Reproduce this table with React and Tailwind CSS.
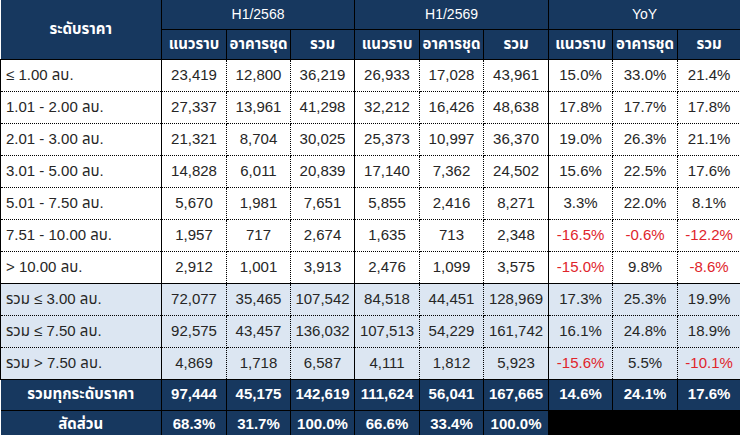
const groups = ["H1/2568", "H1/2569", "YoY"];
const subs = ["แนวราบ", "อาคารชุด", "รวม"];

const rows = [
  ["≤ 1.00 ลบ.", "23,419", "12,800", "36,219", "26,933", "17,028", "43,961", "15.0%", "33.0%", "21.4%"],
  ["1.01 - 2.00 ลบ.", "27,337", "13,961", "41,298", "32,212", "16,426", "48,638", "17.8%", "17.7%", "17.8%"],
  ["2.01 - 3.00 ลบ.", "21,321", "8,704", "30,025", "25,373", "10,997", "36,370", "19.0%", "26.3%", "21.1%"],
  ["3.01 - 5.00 ลบ.", "14,828", "6,011", "20,839", "17,140", "7,362", "24,502", "15.6%", "22.5%", "17.6%"],
  ["5.01 - 7.50 ลบ.", "5,670", "1,981", "7,651", "5,855", "2,416", "8,271", "3.3%", "22.0%", "8.1%"],
  ["7.51 - 10.00 ลบ.", "1,957", "717", "2,674", "1,635", "713", "2,348", "-16.5%", "-0.6%", "-12.2%"],
  ["> 10.00 ลบ.", "2,912", "1,001", "3,913", "2,476", "1,099", "3,575", "-15.0%", "9.8%", "-8.6%"],
];

const subtotals = [
  ["รวม ≤ 3.00 ลบ.", "72,077", "35,465", "107,542", "84,518", "44,451", "128,969", "17.3%", "25.3%", "19.9%"],
  ["รวม ≤ 7.50 ลบ.", "92,575", "43,457", "136,032", "107,513", "54,229", "161,742", "16.1%", "24.8%", "18.9%"],
  ["รวม > 7.50 ลบ.", "4,869", "1,718", "6,587", "4,111", "1,812", "5,923", "-15.6%", "5.5%", "-10.1%"],
];

const total = ["รวมทุกระดับราคา", "97,444", "45,175", "142,619", "111,624", "56,041", "167,665", "14.6%", "24.1%", "17.6%"];
const share = ["สัดส่วน", "68.3%", "31.7%", "100.0%", "66.6%", "33.4%", "100.0%"];

const widths = ["w-[161px]", "w-[65px]", "w-[64px]", "w-[64px]", "w-[65px]", "w-[64px]", "w-[65px]", "w-[64px]", "w-[65px]", "w-[63px]"];

function DataRow({ cells, shaded, first }) {
  return (
    <tr className={`h-[32px] ${shaded ? "bg-[#dce6f2]" : "bg-white"}`}>
      {cells.map((c, i) => {
        const neg = c.startsWith("-");
        const groupStart = i === 0 || i === 1 || i === 4 || i === 7;
        return (
          <td
            key={i}
            className={`border border-dotted border-black whitespace-nowrap
              ${groupStart ? "[border-left-style:solid]" : ""}
              ${i === 0 ? "pl-[5px] text-left" : "text-center"}
              ${first ? "[border-top-style:solid]" : ""}
              ${neg ? "text-[#e0242b]" : "text-[#262626]"}`}
          >
            {c}
          </td>
        );
      })}
    </tr>
  );
}

export default function App() {
  return (
    <div className="w-[740px] h-[435px] overflow-hidden bg-white font-['Liberation_Sans','Noto_Sans_Thai',Tahoma,sans-serif]">
      <table className="table-fixed border-collapse w-[741px] text-[15px]">
        <colgroup>
          {widths.map((w, i) => (
            <col key={i} className={w} />
          ))}
        </colgroup>
        <thead className="bg-[#17385f] text-white">
          <tr className="h-[29px]">
            <th rowSpan={2} className="border border-black border-l-0 border-t-0 font-bold text-[15px]">
              ระดับราคา
            </th>
            {groups.map((g) => (
              <th key={g} colSpan={3} className="border border-black border-t-0 font-normal text-[14px]">
                {g}
              </th>
            ))}
          </tr>
          <tr className="h-[30px]">
            {groups.map((g) =>
              subs.map((s) => (
                <th key={g + s} className="border border-black font-bold text-[15px] whitespace-nowrap">
                  {s}
                </th>
              ))
            )}
          </tr>
        </thead>
        <tbody>
          {rows.map((r, i) => (
            <DataRow key={r[0]} cells={r} first={i === 0} />
          ))}
          {subtotals.map((r, i) => (
            <DataRow key={r[0]} cells={r} shaded first={i === 0} />
          ))}
          {/* totals */}
          <tr className="h-[31px] bg-[#17385f] text-white font-bold">
            {total.map((c, i) => (
              <td key={i} className={`border border-black text-center whitespace-nowrap ${i === 0 ? "border-l-0" : ""}`}>
                {c}
              </td>
            ))}
          </tr>
          <tr className="h-[28px] text-white font-bold">
            {share.map((c, i) => (
              <td key={i} className={`border border-black bg-[#17385f] text-center whitespace-nowrap ${i === 0 ? "border-l-0" : ""}`}>
                {c}
              </td>
            ))}
            <td colSpan={3} className="border border-black bg-black"></td>
          </tr>
        </tbody>
      </table>
    </div>
  );
}
